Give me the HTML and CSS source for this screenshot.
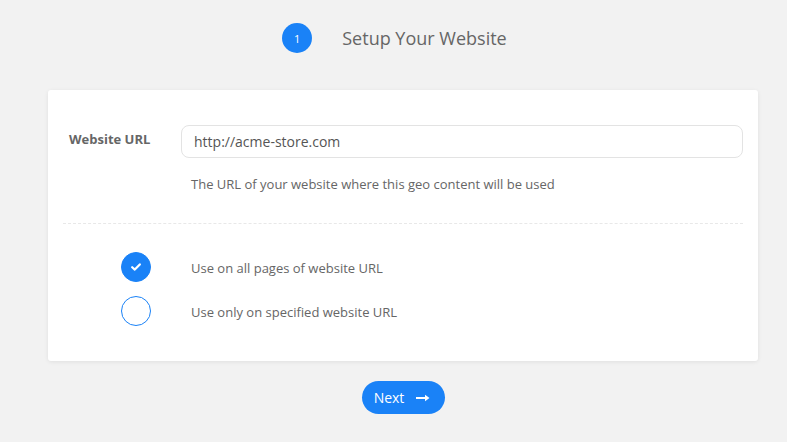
FILE: index.html
```html
<!DOCTYPE html>
<html>
<head>
<meta charset="utf-8">
<link rel="stylesheet" href="styles.css">
</head>
<body>
<div class="header">
  <span class="step">1</span>
  <span class="title">Setup Your Website</span>
</div>
<div class="card">
  <div class="field">
    <div class="label">Website URL</div>
    <div class="control">
      <div class="input">http://acme-store.com</div>
      <div class="help">The URL of your website where this geo content will be used</div>
    </div>
  </div>
  <div class="divider"></div>
  <div class="options">
    <div class="option">
      <span class="radio checked"><svg width="10" height="8" viewBox="0 0 10 8"><path d="M1.2 4.2 L3.8 6.6 L8.8 1.4" fill="none" stroke="#fff" stroke-width="2.2" stroke-linecap="round" stroke-linejoin="round"/></svg></span>
      <span class="opt-text">Use on all pages of website URL</span>
    </div>
    <div class="option">
      <span class="radio"></span>
      <span class="opt-text">Use only on specified website URL</span>
    </div>
  </div>
</div>
<div class="actions">
  <button class="next">Next <svg width="14" height="8" viewBox="0 0 14 8"><path d="M0 4 H11" stroke="#fff" stroke-width="2"/><path d="M9 0.8 L13.5 4 L9 7.2 Z" fill="#fff"/></svg></button>
</div>
</body>
</html>
```
FILE: styles.css
```css
body {
  margin: 0;
  background: #f2f2f2;
  font-family: "Open Sans", "Liberation Sans", sans-serif;
  color: #666;
}
.header {
  display: flex;
  justify-content: center;
  align-items: center;
  padding-top: 23px;
  padding-left: 2px;
  height: 30px;
}
.step {
  width: 30px;
  height: 30px;
  border-radius: 50%;
  background: #1a82f7;
  color: #fff;
  font-size: 11px;
  display: flex;
  align-items: center;
  justify-content: center;
  margin-right: 30px;
}
.title {
  font-size: 18px;
  color: #666;
  margin-top: -1px;
}
.card {
  margin: 37px 29px 0 48px;
  background: #fff;
  border-radius: 3px;
  box-shadow: 0 1px 4px rgba(0,0,0,0.08);
  padding: 35px 15px 35px 15px;
}
.field {
  display: flex;
}
.label {
  width: 112px;
  padding-left: 6px;
  font-size: 13px;
  font-weight: 700;
  color: #666;
  line-height: 33px;
  margin-top: -2px;
}
.control {
  flex: 1;
}
.input {
  height: 31px;
  border: 1px solid #e3e3e3;
  border-radius: 8px;
  padding-left: 12px;
  font-size: 14px;
  line-height: 31px;
  color: #555;
}
.help {
  padding-left: 10px;
  margin-top: 17px;
  font-size: 13px;
  line-height: 19px;
  color: #666;
}
.divider {
  border-top: 1px dashed #e8e8e8;
  margin-top: 29px;
}
.options {
  padding-top: 28px;
  display: flex;
  flex-direction: column;
  gap: 14px;
}
.option {
  display: flex;
  align-items: center;
}
.radio {
  width: 28px;
  height: 28px;
  border: 1px solid #1a82f7;
  border-radius: 50%;
  margin-left: 58px;
  margin-right: 40px;
  display: flex;
  align-items: center;
  justify-content: center;
  box-sizing: content-box;
}
.radio.checked {
  background: #1a82f7;
}
.opt-text {
  font-size: 13px;
  color: #666;
  margin-top: 2px;
}
.actions {
  display: flex;
  justify-content: center;
  padding-left: 19px;
  margin-top: 20px;
}
.next {
  height: 33px;
  width: 83px;
  border: none;
  border-radius: 17px;
  background: #1a82f7;
  color: #fff;
  font-family: "Open Sans", "Liberation Sans", sans-serif;
  font-size: 14px;
  display: flex;
  align-items: center;
  justify-content: center;
  gap: 12px;
  padding: 0 2px 0 0;
}
```
